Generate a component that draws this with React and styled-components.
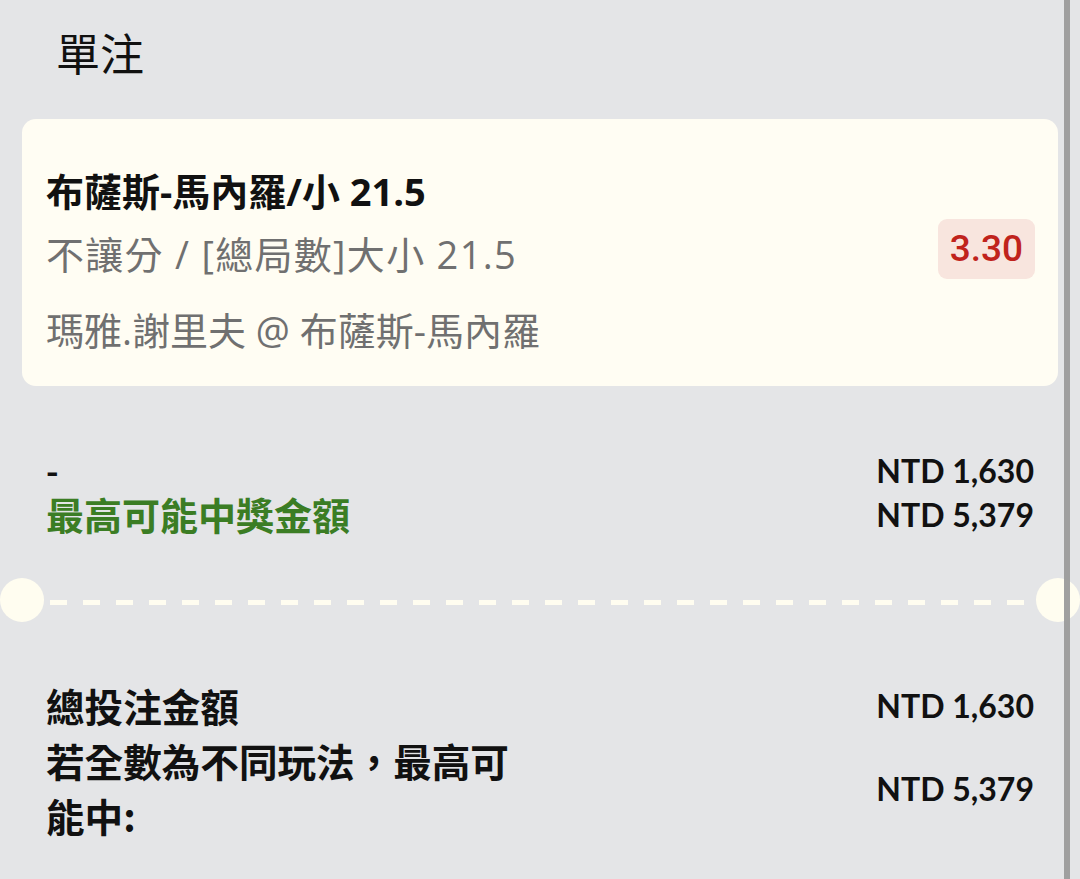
import React from "react";
import styled, { createGlobalStyle } from "styled-components";

const GlobalStyle = createGlobalStyle`
  html, body {
    margin: 0;
    padding: 0;
    background-color: #e4e5e7;
  }
  body {
    font-family: "Noto Sans CJK TC", "Noto Sans", sans-serif;
    color: #111;
  }
`;

const Page = styled.div`
  position: relative;
  width: 1080px;
  min-height: 879px;
  overflow: hidden;
  background-color: #e4e5e7;
`;

const Title = styled.h1`
  margin: 0;
  padding: 24px 0 0 56px;
  height: 119px;
  box-sizing: border-box;
  font-size: 44px;
  font-weight: 400;
  line-height: 56px;
  color: #111;
`;

const Card = styled.div`
  margin: 0 22px;
  height: 267px;
  box-sizing: border-box;
  padding: 0 23px 0 24px;
  background-color: #fffdf3;
  border-radius: 14px;
  display: flex;
  justify-content: space-between;
  align-items: center;
`;

const Details = styled.div`
  display: flex;
  flex-direction: column;
  align-self: flex-start;
  padding-top: 47px;
`;

const Selection = styled.div`
  font-family: "Open Sans", "Noto Sans CJK TC", sans-serif;
  font-size: 38px;
  font-weight: 700;
  line-height: 50px;
  color: #111;
`;

const Market = styled.div`
  margin-top: ${(p) => p.$gap}px;
  font-family: "Open Sans", "Noto Sans CJK TC", sans-serif;
  font-size: 38px;
  font-weight: 400;
  line-height: 50px;
  letter-spacing: ${(p) => p.$spacing || 0}px;
  color: #707070;
`;

const Odds = styled.div`
  margin-bottom: 7px;
  padding: 0 12px;
  height: 60px;
  border-radius: 9px;
  background-color: #f8e5de;
  color: #c0231c;
  font-family: Roboto, "Noto Sans", sans-serif;
  font-size: 37px;
  font-weight: 500;
  line-height: 60px;
`;

const Summary = styled.div`
  margin: 62px 22px 0;
  padding: 0 24px;
  display: grid;
  grid-template-columns: 1fr auto;
  grid-auto-rows: ${(p) => p.$row}px;
  align-items: center;
`;

const Label = styled.div`
  font-size: ${(p) => p.$size || 38}px;
  font-weight: 700;
  line-height: ${(p) => p.$line || 44}px;
  color: ${(p) => p.$color || "#111"};
  max-width: ${(p) => p.$wrap || 600}px;
`;

const Amount = styled.div`
  font-family: Lato, "Noto Sans", sans-serif;
  font-size: 32px;
  font-weight: 700;
  color: #111;
  text-align: right;
`;

const Divider = styled.div`
  margin-top: 42px;
  height: 44px;
  display: flex;
  align-items: center;
`;

const Notch = styled.div`
  width: 44px;
  height: 44px;
  border-radius: 50%;
  background-color: #fffdf0;
  flex: none;
`;

const Dashes = styled.div`
  flex: 1;
  height: 5px;
  margin: 4px 4px 0 6px;
  background-image: repeating-linear-gradient(
    to right,
    #fffdf0 0 17px,
    transparent 17px 33px
  );
`;

const Totals = styled(Summary)`
  margin-top: 55px;
  grid-auto-rows: auto;
`;

const Scrollbar = styled.div`
  position: absolute;
  top: 0;
  right: 10px;
  width: 6px;
  height: 879px;
  background-color: #9b9b9b;
  opacity: 0.95;
`;

export default function App() {
  return (
    <Page>
      <GlobalStyle />
      <Title>單注</Title>
      <Card>
        <Details>
          <Selection>布薩斯-馬內羅/小 21.5</Selection>
          <Market $gap={13} $spacing={1.3}>不讓分 / [總局數]大小 21.5</Market>
          <Market $gap={26}>瑪雅.謝里夫 @ 布薩斯-馬內羅</Market>
        </Details>
        <Odds>3.30</Odds>
      </Card>
      <Summary $row={44}>
        <Label $size={34}>-</Label>
        <Amount>NTD 1,630</Amount>
        <Label $color="#3b7d24">最高可能中獎金額</Label>
        <Amount>NTD 5,379</Amount>
      </Summary>
      <Divider>
        <Notch />
        <Dashes />
        <Notch />
      </Divider>
      <Totals>
        <Label $size={38.6} $line={56}>總投注金額</Label>
        <Amount>NTD 1,630</Amount>
        <Label $size={38.6} $line={55} $wrap={480}>若全數為不同玩法，最高可能中:</Label>
        <Amount>NTD 5,379</Amount>
      </Totals>
      <Scrollbar />
    </Page>
  );
}
